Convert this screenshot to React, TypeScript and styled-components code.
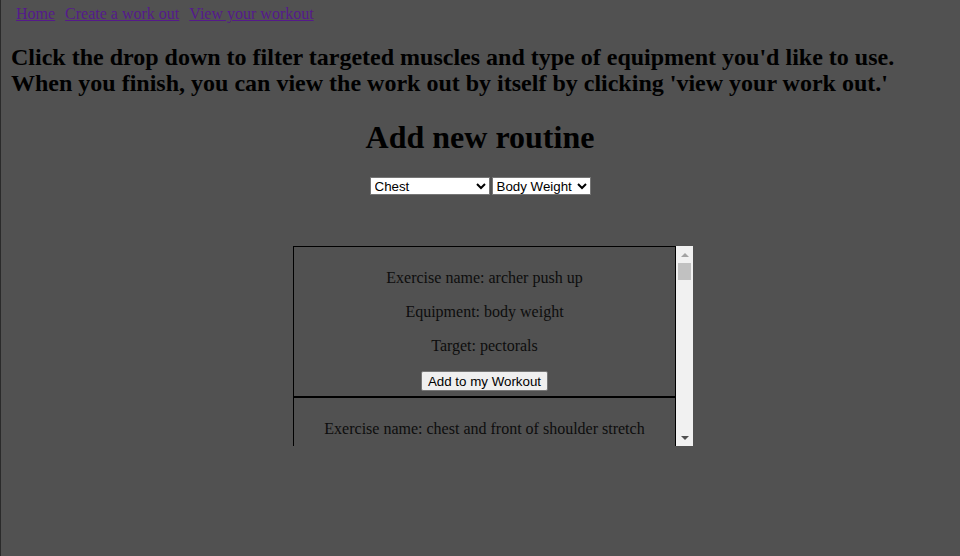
import React, { useState } from 'react'
import styled, { createGlobalStyle } from 'styled-components'

interface IExercise {
    name: string;
    equipment: string;
    target: string;
}

const GlobalStyle = createGlobalStyle`
    html {
        background: linear-gradient(to right, #2a2a2a 1px, #515151 1px);
    }
    body {
        margin: 0 8px 8px 8px;
        font-family: "Liberation Serif", "Times New Roman", serif;
        color: #000;
    }
`

const Nav = styled.nav`
    display: flex;
    gap: 10px;
    padding: 5px 8px 0 8px;
    font-size: 16px;
    line-height: 18px;
`

const NavLink = styled.a`
    color: #551a8b;
    text-decoration: underline;
`

const Intro = styled.h2`
    font-size: 24px;
    line-height: 26px;
    margin: 21px 0 20px 3px;
`

const Title = styled.h1`
    font-size: 32px;
    text-align: center;
    margin: 23px 0 21px 0;
`

const Filters = styled.div`
    display: flex;
    justify-content: center;
    gap: 2px;
    margin-bottom: 51px;
`

const Select = styled.select<{ $width: number }>`
    width: ${p => p.$width}px;
    height: 18px;
    font-family: "Liberation Sans", Arial, sans-serif;
    font-size: 13.33px;
    background: #fff;
    color: #000;
    border: 1px solid #767676;
    border-radius: 0;
    padding: 0;
`

const ListWrap = styled.div`
    display: flex;
    justify-content: center;
    padding-left: 26px;
`

const Frame = styled.div`
    display: flex;
    width: 400px;
    height: 200px;
`

const List = styled.div`
    flex: 1;
    overflow-y: auto;
    scrollbar-width: none;
    &::-webkit-scrollbar {
        display: none;
    }
`

const ScrollBar = styled.div`
    width: 17px;
    display: flex;
    flex-direction: column;
    background: #f1f1f1;
`

const ScrollButton = styled.div`
    height: 17px;
    display: flex;
    align-items: center;
    justify-content: center;
`

const Track = styled.div`
    flex: 1;
    padding: 0 2px;
`

const Thumb = styled.div`
    height: 17px;
    background: #c1c1c1;
`

const Card = styled.div`
    border: 1px solid #000;
    padding: 6px 0 5px 0;
    text-align: center;
    font-size: 16px;
    color: #0d0d0d;
`

const Line = styled.p`
    margin: 16px 0;
`

const AddButton = styled.button`
    font-family: "Liberation Sans", Arial, sans-serif;
    font-size: 13.33px;
    background: #efefef;
    border: 1px solid #767676;
    border-radius: 2px;
    padding: 1px 6px;
    height: 20px;
    color: #000;
`

const exercises: IExercise[] = [
    { name: 'archer push up', equipment: 'body weight', target: 'pectorals' },
    { name: 'chest and front of shoulder stretch', equipment: 'body weight', target: 'pectorals' },
    { name: 'chest dip', equipment: 'body weight', target: 'pectorals' },
    { name: 'chest tap push-up (male)', equipment: 'body weight', target: 'pectorals' },
    { name: 'clap push up', equipment: 'body weight', target: 'pectorals' },
    { name: 'close-grip push-up', equipment: 'body weight', target: 'pectorals' },
    { name: 'decline push-up', equipment: 'body weight', target: 'pectorals' },
    { name: 'diamond push-up', equipment: 'body weight', target: 'pectorals' },
    { name: 'incline push up', equipment: 'body weight', target: 'pectorals' },
    { name: 'isometric chest squeeze', equipment: 'body weight', target: 'pectorals' },
    { name: 'push-up', equipment: 'body weight', target: 'pectorals' },
    { name: 'wide hand push up', equipment: 'body weight', target: 'pectorals' },
    { name: 'one arm chest dip', equipment: 'body weight', target: 'pectorals' },
]

export default function App() {
    const [muscle, setMuscle] = useState('chest')
    const [equipment, setEquipment] = useState('body weight')

    return (
        <>
            <GlobalStyle />
            <Nav>
                <NavLink href="#">Home</NavLink>
                <NavLink href="#">Create a work out</NavLink>
                <NavLink href="#">View your workout</NavLink>
            </Nav>
            <Intro>
                Click the drop down to filter targeted muscles and type of equipment you'd like to use.
                When you finish, you can view the work out by itself by clicking 'view your work out.'
            </Intro>
            <Title>Add new routine</Title>
            <Filters>
                <Select $width={120} value={muscle} onChange={e => setMuscle(e.target.value)}>
                    <option value="back">Back</option>
                    <option value="cardio">Cardio</option>
                    <option value="chest">Chest</option>
                    <option value="lower arms">Lower Arms</option>
                    <option value="shoulders">Shoulders</option>
                    <option value="upper legs">Upper Legs</option>
                </Select>
                <Select $width={99} value={equipment} onChange={e => setEquipment(e.target.value)}>
                    <option value="body weight">Body Weight</option>
                    <option value="barbell">Barbell</option>
                    <option value="dumbbell">Dumbbell</option>
                </Select>
            </Filters>
            <ListWrap>
                <Frame>
                    <List>
                        {exercises.map(ex => (
                            <Card key={ex.name}>
                                <Line>Exercise name: {ex.name}</Line>
                                <Line>Equipment: {ex.equipment}</Line>
                                <Line>Target: {ex.target}</Line>
                                <AddButton>Add to my Workout</AddButton>
                            </Card>
                        ))}
                    </List>
                    <ScrollBar>
                        <ScrollButton>
                            <svg width="8" height="4" viewBox="0 0 8 4"><path d="M0 4 L4 0 L8 4 Z" fill="#a3a3a3" /></svg>
                        </ScrollButton>
                        <Track><Thumb /></Track>
                        <ScrollButton>
                            <svg width="8" height="4" viewBox="0 0 8 4"><path d="M0 0 L8 0 L4 4 Z" fill="#505050" /></svg>
                        </ScrollButton>
                    </ScrollBar>
                </Frame>
            </ListWrap>
        </>
    )
}
